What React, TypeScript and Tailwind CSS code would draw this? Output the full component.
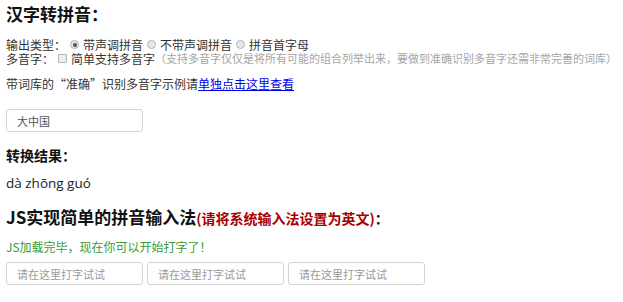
const Radio = ({ checked }: { checked?: boolean }) => (
  <span className="shrink-0 inline-flex items-center justify-center w-[9px] h-[9px] rounded-full border border-[#b5b5b5] bg-[#e6e6e6] mx-[4px]">
    {checked && <span className="w-[4px] h-[4px] rounded-full bg-[#555]" />}
  </span>
);

const Box = ({ value, placeholder }: { value?: string; placeholder?: string }) => (
  <input
    readOnly
    defaultValue={value}
    placeholder={placeholder}
    className="shrink-0 w-[137px] h-[23px] border border-[#d4d4d4] rounded-[3px] px-[10px] text-[11px] text-[#555] placeholder:text-[#9a9a9a] outline-none bg-white"
  />
);

export default function App() {
  return (
    <div className="px-[6px] pt-[3px] bg-white text-[#333] text-[12px] font-['Microsoft_YaHei','Noto_Sans_CJK_SC',sans-serif] overflow-hidden">
      <h3 className="h-[22px] leading-[22px] text-[17px] font-bold text-[#111]">汉字转拼音：</h3>

      <div className="mt-[12px] leading-[15px] flex items-center whitespace-nowrap">
        <span className="shrink-0">输出类型：</span>
        <Radio checked />
        <span className="shrink-0">带声调拼音</span>
        <Radio />
        <span className="shrink-0">不带声调拼音</span>
        <Radio />
        <span className="shrink-0">拼音首字母</span>
      </div>
      <div className="leading-[13px] flex items-center whitespace-nowrap">
        <span className="shrink-0">多音字：</span>
        <span className="shrink-0 inline-block w-[9px] h-[9px] border border-[#b5b5b5] bg-[#eee] rounded-[1px] mx-[4px]" />
        <span className="shrink-0">简单支持多音字</span>
        <span className="shrink-0 text-[#a5a5a5] text-[11px]">（支持多音字仅仅是将所有可能的组合列举出来，要做到准确识别多音字还需非常完善的词库）</span>
      </div>

      <p className="mt-[12px] leading-[14px]">
        带词库的“准确”识别多音字示例请
        <a href="#" className="text-[#0000ee] underline">单独点击这里查看</a>
      </p>

      <div className="mt-[18px]">
        <Box value="大中国" />
      </div>

      <h4 className="mt-[13px] h-[20px] leading-[20px] text-[14px] font-bold text-[#111]">转换结果：</h4>
      <p className="mt-[10px] leading-[16px] text-[13.5px] font-['Open_Sans','Noto_Sans',sans-serif] text-[#222]">dà zhōng guó</p>

      <h3 className="mt-[15px] h-[22px] leading-[22px] text-[17px] font-bold text-[#111] whitespace-nowrap">
        JS实现简单的拼音输入法
        <span className="text-[14px] text-[#a80000]">(请将系统输入法设置为英文)</span>
        <span className="text-[14px]">：</span>
      </h3>

      <p className="mt-[11px] leading-[16px] text-[#3a9a35]">JS加载完毕，现在你可以开始打字了！</p>

      <div className="mt-[7px] flex gap-[4px]">
        <Box placeholder="请在这里打字试试" />
        <Box placeholder="请在这里打字试试" />
        <Box placeholder="请在这里打字试试" />
      </div>
    </div>
  );
}
